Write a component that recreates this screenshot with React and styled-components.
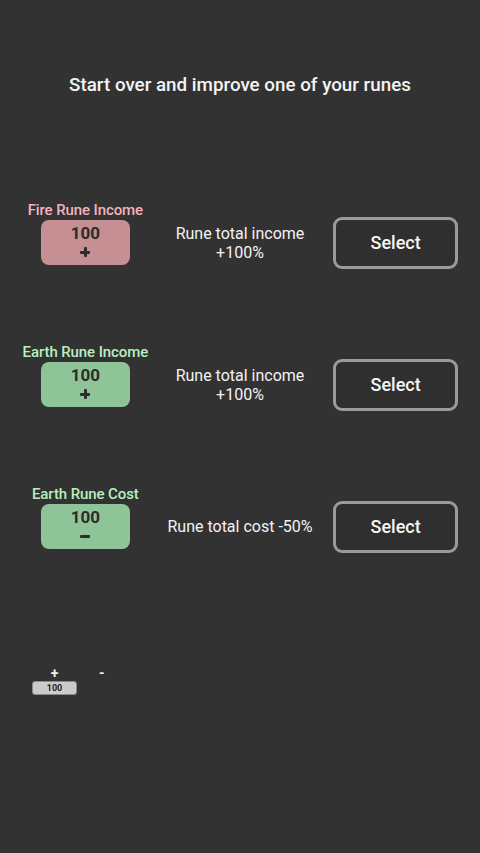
import React from 'react'
import styled, { createGlobalStyle } from 'styled-components'

const GlobalStyle = createGlobalStyle`
    body {
        margin: 0;
        background: #323232;
        font-family: Roboto, "Liberation Sans", sans-serif;
    }
`

const runes = [
    { label: 'Fire Rune Income', kind: 'fire', minus: false, text: ['Rune total income', '+100%'] },
    { label: 'Earth Rune Income', kind: 'earth', minus: false, text: ['Rune total income', '+100%'] },
    { label: 'Earth Rune Cost', kind: 'earth', minus: true, text: ['Rune total cost -50%'] },
]

const palette = {
    fire: { label: '#f3b3bd', box: '#c58f93' },
    earth: { label: '#b6f0bf', box: '#8fc498' },
}

function App() {
    return (
        <Page>
            <GlobalStyle />
            <Title>Start over and improve one of your runes</Title>
            <Rows>
                {runes.map((r, i) => (
                    <Row key={i}>
                        <RuneCol>
                            <RuneLabel kind={r.kind}>{r.label}</RuneLabel>
                            <RuneBox kind={r.kind}>
                                <Amount>100</Amount>
                                <SignSlot>
                                    <Sign minus={r.minus} />
                                </SignSlot>
                            </RuneBox>
                        </RuneCol>
                        <Effect>
                            {r.text.map((t) => <div key={t}>{t}</div>)}
                        </Effect>
                        <ButtonCol>
                            <SelectButton>Select</SelectButton>
                        </ButtonCol>
                    </Row>
                ))}
            </Rows>
            <Counter>
                <CounterCol>
                    <Tiny>+</Tiny>
                    <TinyBox>100</TinyBox>
                </CounterCol>
                <Tiny>-</Tiny>
            </Counter>
        </Page>
    )
}

export default App;

const Page = styled.div`
    min-height: 853px;
    padding: 73px 8px 0;
    box-sizing: border-box;
    color: #f2f2f2;
`

const Title = styled.h1`
    margin: 0;
    text-align: center;
    font-size: 18.8px;
    line-height: 24px;
    font-weight: 500;
    color: #f4f4f4;
`

const Rows = styled.div`
    display: flex;
    flex-direction: column;
    gap: 61px;
    margin-top: 105px;
`

const Row = styled.div`
    display: grid;
    grid-template-columns: 1fr 1fr 1fr;
    align-items: center;
    height: 81px;
`

const RuneCol = styled.div`
    display: flex;
    flex-direction: column;
    align-items: center;
    padding-bottom: 18px;
`

const RuneLabel = styled.div`
    font-size: 15px;
    line-height: 17px;
    font-weight: 500;
    letter-spacing: -0.1px;
    white-space: nowrap;
    margin-bottom: 1px;
    color: ${(p) => palette[p.kind].label};
`

const RuneBox = styled.div`
    width: 89px;
    height: 45px;
    border-radius: 8px;
    background: ${(p) => palette[p.kind].box};
    display: flex;
    flex-direction: column;
    align-items: center;
    justify-content: center;
    color: #2c2c2c;
`

const Amount = styled.div`
    font-size: 17px;
    line-height: 20px;
    font-weight: 700;
    margin-top: -1px;
`

const SignSlot = styled.div`
    height: 19px;
    display: flex;
    align-items: center;
    justify-content: center;
`

const Sign = styled.div`
    position: relative;
    width: 10px;
    height: 10px;
    &::before, &::after {
        content: '';
        position: absolute;
        background: #2c2c2c;
        border-radius: 1px;
    }
    &::before {
        left: 0;
        top: 3.5px;
        width: 10px;
        height: 3px;
    }
    &::after {
        display: ${(p) => (p.minus ? 'none' : 'block')};
        left: 3.5px;
        top: 0;
        width: 3px;
        height: 10px;
    }
`

const Effect = styled.div`
    text-align: center;
    font-size: 16px;
    line-height: 19px;
    color: #f2f2f2;
`

const ButtonCol = styled.div`
    display: flex;
    justify-content: center;
    padding-left: 2px;
`

const SelectButton = styled.button`
    width: 125px;
    height: 52px;
    border: 3px solid #9b9b9b;
    border-radius: 9px;
    background: #2f2f2f;
    color: #f6f6f6;
    font-family: Roboto, "Liberation Sans", sans-serif;
    font-size: 18px;
    font-weight: 500;
    cursor: pointer;
`

const Counter = styled.div`
    display: flex;
    align-items: flex-start;
    gap: 22px;
    margin-top: 99px;
    padding-left: 24px;
`

const CounterCol = styled.div`
    display: flex;
    flex-direction: column;
    align-items: center;
`

const Tiny = styled.div`
    font-size: 14px;
    line-height: 15px;
    font-weight: 700;
    color: #f2f2f2;
`

const TinyBox = styled.div`
    width: 45px;
    height: 14px;
    box-sizing: border-box;
    border: 1px solid #8a8a8a;
    border-radius: 3px;
    background: #cbcbcb;
    color: #222;
    font-size: 9px;
    line-height: 12px;
    font-weight: 700;
    text-align: center;
`
